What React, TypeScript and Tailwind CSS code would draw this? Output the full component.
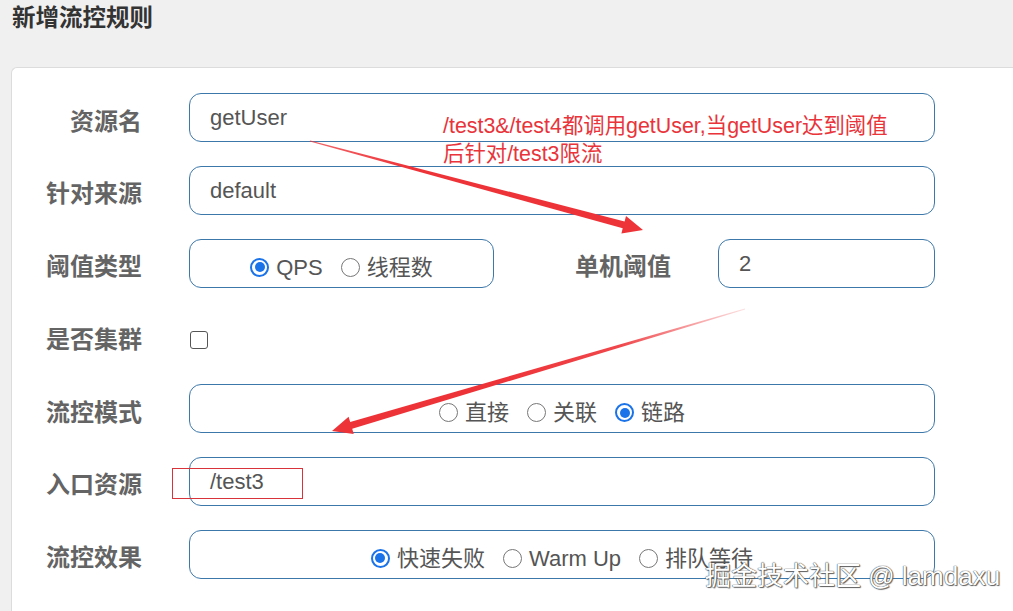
import React from "react";

type Pt = [number, number];

// tapered arrow polygon: thin at start, thick near the head
const arrowPoints = (start: Pt, tip: Pt, w0: number, w1: number, headLen: number, headW: number) => {
  const dx = tip[0] - start[0];
  const dy = tip[1] - start[1];
  const len = Math.hypot(dx, dy);
  const ux = dx / len;
  const uy = dy / len;
  const nx = -uy;
  const ny = ux;
  const bx = tip[0] - ux * headLen;
  const by = tip[1] - uy * headLen;
  const pts: Pt[] = [
    [start[0] + nx * w0, start[1] + ny * w0],
    [bx + nx * w1, by + ny * w1],
    [bx + nx * headW, by + ny * headW],
    tip,
    [bx - nx * headW, by - ny * headW],
    [bx - nx * w1, by - ny * w1],
    [start[0] - nx * w0, start[1] - ny * w0]
  ];
  return pts.map((p) => `${p[0].toFixed(1)},${p[1].toFixed(1)}`).join(" ");
};

function Radio({ label, checked }: { label: string; checked?: boolean }) {
  return (
    <div className="flex items-center gap-[7px]">
      {checked ? (
        <span className="w-[19px] h-[19px] rounded-full border-2 border-[#1a73e8] flex items-center justify-center bg-white">
          <span className="w-[10px] h-[10px] rounded-full bg-[#1a73e8]" />
        </span>
      ) : (
        <span className="w-[19px] h-[19px] rounded-full border border-[#777] bg-white" />
      )}
      <span>{label}</span>
    </div>
  );
}

function Label({ text }: { text: string }) {
  return (
    <div className="h-[49px] flex items-center justify-end pt-2 text-[24px] font-bold text-[#646464]">
      {text}
    </div>
  );
}

function Input({ value, className = "" }: { value: string; className?: string }) {
  return (
    <div className={`h-[49px] rounded-xl border border-[#3d78aa] bg-white flex items-center pl-5 text-[22px] text-[#555] ${className}`}>
      {value}
    </div>
  );
}

function RadioBox({ items, className = "" }: { items: { label: string; checked?: boolean }[]; className?: string }) {
  return (
    <div className={`h-[49px] rounded-xl border border-[#3d78aa] bg-white flex items-center justify-center gap-[18px] pt-2 text-[22px] text-[#555] ${className}`}>
      {items.map((it) => (
        <Radio key={it.label} label={it.label} checked={it.checked} />
      ))}
    </div>
  );
}

export default function App() {
  const fontStack = "[font-family:'Liberation_Sans','Noto_Sans_CJK_SC',sans-serif]";

  return (
    <div className={`relative w-[1013px] h-[611px] overflow-hidden bg-[#f0f0f0] ${fontStack}`}>
      <div className="h-[67px] pl-3 pt-[2px]">
        <h1 className="text-[23.5px] leading-[32px] font-bold text-[#333]">新增流控规则</h1>
      </div>

      <div className="ml-[11px] h-[600px] bg-white border border-r-0 border-b-0 border-[#dcdcdc] rounded-tl-md pt-[25px]">
        <div className="grid grid-cols-[130px_746px] gap-x-[47px] gap-y-[23.8px]">
          <Label text="资源名" />
          <Input value="getUser" />

          <Label text="针对来源" />
          <Input value="default" />

          <Label text="阈值类型" />
          <div className="flex items-center">
            <RadioBox className="w-[305px]" items={[{ label: "QPS", checked: true }, { label: "线程数" }]} />
            <div className="flex-1 text-right pr-[47px] pt-2 text-[24px] font-bold text-[#646464]">单机阈值</div>
            <Input value="2" className="w-[217px]" />
          </div>

          <Label text="是否集群" />
          <div className="h-[49px] flex items-center pt-2">
            <span className="ml-px w-[18px] h-[18px] rounded-[3px] border border-[#555] bg-white" />
          </div>

          <Label text="流控模式" />
          <RadioBox items={[{ label: "直接" }, { label: "关联" }, { label: "链路", checked: true }]} />

          <Label text="入口资源" />
          <Input value="/test3" />

          <Label text="流控效果" />
          <RadioBox items={[{ label: "快速失败", checked: true }, { label: "Warm Up" }, { label: "排队等待" }]} />
        </div>
      </div>

      {/* annotation overlay */}
      <div className="absolute left-[443px] top-[112px] text-[21.4px] leading-[28px] text-[#e8343a]">
        <div>/test3&amp;/test4都调用getUser,当getUser达到阈值</div>
        <div>后针对/test3限流</div>
      </div>

      <div className="absolute left-[172px] top-[468px] w-[131px] h-[31px] border border-[#d8323a]" />

      <svg className="absolute inset-0 pointer-events-none" width="1013" height="611">
        <defs>
          <linearGradient id="a1" gradientUnits="userSpaceOnUse" x1="310" y1="141" x2="643" y2="230">
            <stop offset="0" stopColor="#ee3338" stopOpacity="0.75" />
            <stop offset="0.3" stopColor="#ee3338" stopOpacity="1" />
          </linearGradient>
          <linearGradient id="a2" gradientUnits="userSpaceOnUse" x1="745" y1="309" x2="332" y2="431">
            <stop offset="0" stopColor="#ee3338" stopOpacity="0.15" />
            <stop offset="0.3" stopColor="#ee3338" stopOpacity="0.9" />
            <stop offset="0.6" stopColor="#ee3338" stopOpacity="1" />
          </linearGradient>
        </defs>
        <polygon points={arrowPoints([310, 141], [643, 230], 0.6, 3.6, 20, 9)} fill="url(#a1)" />
        <polygon points={arrowPoints([745, 309], [332, 431], 0.4, 3.6, 20, 9)} fill="url(#a2)" />
      </svg>

      <div className="absolute left-[705px] top-[559px] text-[26px] leading-[34px] text-white [text-shadow:0_0_1px_#444,0_0_1px_#444,1px_1px_1px_#666]">
        掘金技术社区 @ lamdaxu
      </div>
    </div>
  );
}
